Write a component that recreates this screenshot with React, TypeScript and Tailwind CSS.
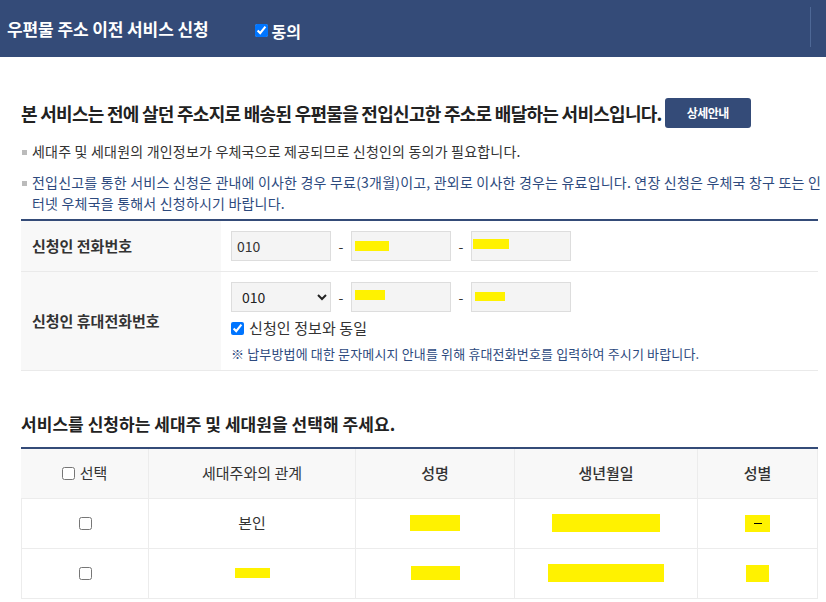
import React from "react";

const font = { fontFamily: '"Noto Sans CJK KR", "Noto Sans", sans-serif' };

function Yellow({ w, h, dash }: { w: number; h: number; dash?: boolean }) {
  return (
    <span
      className="inline-flex items-center justify-center bg-[#fff200] align-middle"
      style={{ width: w, height: h }}
    >
      {dash ? <span className="block h-[1px] w-[8px] bg-black" /> : null}
    </span>
  );
}

export default function App() {
  return (
    <div className="w-[826px] h-[602px] overflow-hidden bg-white text-[#333]" style={font}>
      {/* header */}
      <div className="relative flex h-[57px] items-center bg-[#344b78] pl-[7px]">
        <h1 className="text-[17px] font-bold tracking-[-0.1px] text-white">우편물 주소 이전 서비스 신청</h1>
        <label className="ml-[46px] mt-[4px] flex items-center gap-[4px] text-[16px] font-bold text-white">
          <input type="checkbox" defaultChecked className="m-0 h-[13px] w-[13px] accent-[#0075ff]" />
          동의
        </label>
        <div className="absolute left-[810px] top-[7px] h-[40px] w-[1px] bg-[#4e6896]" />
      </div>

      <div className="pl-[21px] pr-[8px]">
        {/* intro heading */}
        <div className="mt-[41px] flex items-center">
          <h2 className="text-[18px] font-bold tracking-[-0.72px] text-[#222]">
            본 서비스는 전에 살던 주소지로 배송된 우편물을 전입신고한 주소로 배달하는 서비스입니다.
          </h2>
          <button className="ml-[3px] h-[30px] w-[86px] rounded-[3px] bg-[#344b78] text-[12px] font-bold tracking-[-0.5px] text-white">
            상세안내
          </button>
        </div>

        <ul className="mr-[-8px] mt-[13px] text-[14px] leading-[21px] tracking-[0.2px]">
          <li className="relative pl-[11px]">
            <span className="absolute left-[1px] top-[9px] h-[5px] w-[5px] bg-[#bbb]" />
            세대주 및 세대원의 개인정보가 우체국으로 제공되므로 신청인의 동의가 필요합니다.
          </li>
          <li className="relative mt-[10px] break-all pl-[11px] text-[#2d4a7e]">
            <span className="absolute left-[1px] top-[9px] h-[5px] w-[5px] bg-[#bbb]" />
            전입신고를 통한 서비스 신청은 관내에 이사한 경우 무료(3개월)이고, 관외로 이사한 경우는 유료입니다. 연장 신청은 우체국 창구 또는 인터넷 우체국을 통해서 신청하시기 바랍니다.
          </li>
        </ul>

        {/* applicant table */}
        <div className="mt-[5px] border-t-2 border-[#344b78]">
          <div className="flex h-[51px] border-b border-[#eaeaea]">
            <div className="flex w-[200px] items-center bg-[#f8f8f8] pl-[11px] text-[15px] font-bold">
              신청인 전화번호
            </div>
            <div className="flex items-center pl-[10px]">
              <div className="flex h-[30px] w-[100px] items-center border border-[#ddd] bg-[#f4f4f4] pl-[5px] text-[14px]">010</div>
              <span className="w-[20px] text-center text-[14px]">-</span>
              <div className="flex h-[30px] w-[100px] items-center border border-[#ddd] bg-[#f4f4f4] pl-[3px]">
                <Yellow w={34} h={10} />
              </div>
              <span className="w-[20px] text-center text-[14px]">-</span>
              <div className="flex h-[30px] w-[100px] items-start border border-[#ddd] bg-[#f4f4f4] pl-[1px] pt-[7px]">
                <Yellow w={36} h={10} />
              </div>
            </div>
          </div>
          <div className="flex h-[99px] border-b border-[#eaeaea]">
            <div className="flex w-[200px] items-center bg-[#f8f8f8] pl-[11px] text-[15px] font-bold">
              신청인 휴대전화번호
            </div>
            <div className="flex flex-col pl-[10px] pt-[10px]">
              <div className="flex items-center">
                <select
                  defaultValue="010"
                  className="h-[30px] w-[100px] border border-[#ddd] bg-[#f4f4f4] pl-[6px] text-[14px] text-[#222]"
                >
                  <option value="010">010</option>
                  <option value="011">011</option>
                </select>
                <span className="w-[20px] text-center text-[14px]">-</span>
                <div className="flex h-[30px] w-[100px] items-start border border-[#ddd] bg-[#f4f4f4] pl-[3px] pt-[7px]">
                  <Yellow w={30} h={10} />
                </div>
                <span className="w-[20px] text-center text-[14px]">-</span>
                <div className="flex h-[30px] w-[100px] items-start border border-[#ddd] bg-[#f4f4f4] pl-[3px] pt-[9px]">
                  <Yellow w={30} h={9} />
                </div>
              </div>
              <label className="mt-[5px] flex items-center gap-[5px] text-[15px] tracking-[0.1px]">
                <input type="checkbox" defaultChecked className="m-0 h-[13px] w-[13px] accent-[#0075ff]" />
                신청인 정보와 동일
              </label>
              <p className="mt-[4px] text-[13px] tracking-[0.15px] text-[#2d4a7e]">
                ※ 납부방법에 대한 문자메시지 안내를 위해 휴대전화번호를 입력하여 주시기 바랍니다.
              </p>
            </div>
          </div>
        </div>

        {/* member table */}
        <h3 className="mt-[40px] text-[17px] font-bold tracking-[0.05px] text-[#222]">
          서비스를 신청하는 세대주 및 세대원을 선택해 주세요.
        </h3>
        <div className="mt-[10px] border-t-2 border-[#344b78]">
          <div className="grid grid-cols-[128px_207px_159px_183px_120px] text-[15px]">
            <div className="flex h-[50px] items-center justify-center gap-[5px] border-r border-b border-[#ececec] bg-[#f8f8f8]">
              <input type="checkbox" className="m-0 h-[13px] w-[13px]" />
              선택
            </div>
            <div className="flex h-[50px] items-center justify-center border-r border-b border-[#ececec] bg-[#f8f8f8]">세대주와의 관계</div>
            <div className="flex h-[50px] items-center justify-center border-r border-b border-[#ececec] bg-[#f8f8f8] font-medium">성명</div>
            <div className="flex h-[50px] items-center justify-center border-r border-b border-[#ececec] bg-[#f8f8f8] font-medium">생년월일</div>
            <div className="flex h-[50px] items-center justify-center border-r border-b border-[#ececec] bg-[#f8f8f8] font-medium">성별</div>

            <div className="flex h-[50px] items-center justify-center border-r border-b border-l border-[#ececec]">
              <input type="checkbox" className="m-0 h-[13px] w-[13px]" />
            </div>
            <div className="flex h-[50px] items-center justify-center border-r border-b border-[#ececec]">본인</div>
            <div className="flex h-[50px] items-center justify-center border-r border-b border-[#ececec]">
              <Yellow w={50} h={16} />
            </div>
            <div className="flex h-[50px] items-center justify-center border-r border-b border-[#ececec]">
              <Yellow w={108} h={18} />
            </div>
            <div className="flex h-[50px] items-center justify-center border-r border-b border-[#ececec]">
              <Yellow w={25} h={17} dash />
            </div>

            <div className="flex h-[50px] items-center justify-center border-r border-b border-l border-[#ececec]">
              <input type="checkbox" className="m-0 h-[13px] w-[13px]" />
            </div>
            <div className="flex h-[50px] items-center justify-center border-r border-b border-[#ececec]">
              <Yellow w={35} h={10} />
            </div>
            <div className="flex h-[50px] items-center justify-center border-r border-b border-[#ececec]">
              <Yellow w={49} h={14} />
            </div>
            <div className="flex h-[50px] items-center justify-center border-r border-b border-[#ececec]">
              <Yellow w={116} h={18} />
            </div>
            <div className="flex h-[50px] items-center justify-center border-r border-b border-[#ececec]">
              <Yellow w={23} h={17} />
            </div>
          </div>
        </div>
      </div>
    </div>
  );
}
